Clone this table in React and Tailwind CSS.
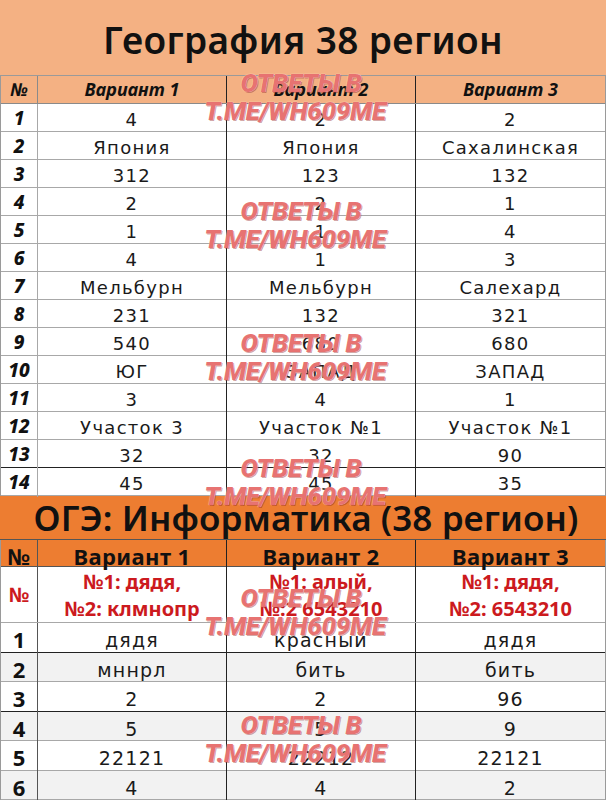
import React from "react";

const T1 = [
  ["1", "4", "2", "2"],
  ["2", "Япония", "Япония", "Сахалинская"],
  ["3", "312", "123", "132"],
  ["4", "2", "2", "1"],
  ["5", "1", "1", "4"],
  ["6", "4", "1", "3"],
  ["7", "Мельбурн", "Мельбурн", "Салехард"],
  ["8", "231", "132", "321"],
  ["9", "540", "680", "680"],
  ["10", "ЮГ", "ЗАПАД", "ЗАПАД"],
  ["11", "3", "4", "1"],
  ["12", "Участок 3", "Участок №1", "Участок №1"],
  ["13", "32", "32", "90"],
  ["14", "45", "45", "35"],
];

const T2 = [
  ["1", "дядя", "красный", "дядя"],
  ["2", "мннрл", "бить", "бить"],
  ["3", "2", "2", "96"],
  ["4", "5", "5", "9"],
  ["5", "22121", "22212", "22121"],
  ["6", "4", "4", "2"],
];

const data = "font-['DejaVu_Sans',sans-serif] text-[18px] tracking-[1.3px] text-[#1a1a1a] pt-[2px]";
const data2 = "font-['DejaVu_Sans',sans-serif] text-[19px] tracking-[1.2px] text-[#1a1a1a] pt-[2px]";

function Watermark({ top }) {
  return (
    <div
      className="absolute left-[185px] w-[220px] flex flex-col items-center pointer-events-none font-['Roboto',sans-serif] font-black italic text-[26px] leading-[28px] tracking-[-0.3px] text-[#e35a58]/85 [text-shadow:0_0_1px_#fff,1px_1px_0_rgba(130,0,0,0.4)]"
      style={{ top }}
    >
      <span className="translate-x-[6px]">ОТВЕТЫ В</span>
      <span>T.ME/WH609ME</span>
    </div>
  );
}

export default function App() {
  return (
    <div className="relative w-[606px] h-[800px] overflow-hidden bg-white">
      {/* Title 1 */}
      <div className="h-[76px] bg-[#f4b183] border-b border-[#9a9a9a] flex items-center justify-center pt-[4px]">
        <span className="font-['Noto_Sans',sans-serif] font-semibold text-[37px] text-[#111] tracking-[0.4px]">
          География 38 регион
        </span>
      </div>

      {/* Table 1 */}
      <div className="border-l border-r border-[#9a9a9a]">
        <div className="grid grid-cols-[37px_189px_189px_189px] h-[28px] bg-[#f4b183] border-b border-[#8a8a8a] font-['Noto_Sans',sans-serif] font-bold italic text-[18px] text-[#111]">
          <div className="flex items-center justify-center border-r border-[#8a8a8a]">№</div>
          <div className="flex items-center justify-center border-r border-[#222]">Вариант 1</div>
          <div className="flex items-center justify-center border-r border-[#222]">Вариант 2</div>
          <div className="flex items-center justify-center">Вариант 3</div>
        </div>
        {T1.map((r, i) => (
          <div
            key={i}
            className={
              "grid grid-cols-[37px_189px_189px_189px] h-[28px] border-b " +
              (i === 12 ? "border-[#222]" : "border-[#a8a8a8]")
            }
          >
            <div className="flex items-center justify-center border-r border-[#a8a8a8] font-['Noto_Sans',sans-serif] font-extrabold italic text-[19px] text-[#111]">
              {r[0]}
            </div>
            <div className={"flex items-center justify-center border-r border-[#222] " + data}>{r[1]}</div>
            <div className={"flex items-center justify-center border-r border-[#222] " + data}>{r[2]}</div>
            <div className={"flex items-center justify-center " + data}>{r[3]}</div>
          </div>
        ))}
      </div>

      {/* Title 2 */}
      <div className="h-[44px] bg-[#ed7d31] border-b border-[#555] flex items-center justify-center">
        <span className="font-['Noto_Sans',sans-serif] font-semibold text-[35px] text-[#111] leading-none tracking-[0.1px] translate-x-[3px]">
          ОГЭ: Информатика (38 регион)
        </span>
      </div>

      {/* Table 2 */}
      <div className="border-l border-r border-[#9a9a9a]">
        <div className="grid grid-cols-[37px_189px_189px_189px] h-[27px] bg-[#ed7d31] border-b border-[#555] font-['Noto_Sans',sans-serif] font-bold text-[22px] tracking-[0.4px] text-[#111]">
          <div className="flex items-center justify-center border-r border-[#555]">№</div>
          <div className="flex items-center justify-center border-r border-[#222]">Вариант 1</div>
          <div className="flex items-center justify-center border-r border-[#222]">Вариант 2</div>
          <div className="flex items-center justify-center">Вариант 3</div>
        </div>
        <div className="grid grid-cols-[37px_189px_189px_189px] h-[56px] border-b border-[#a8a8a8] font-['Noto_Sans',sans-serif] font-bold text-[20px] leading-[27px] text-[#cc1a1e]">
          <div className="flex items-center justify-center border-r border-[#555]">№</div>
          <div className="flex flex-col items-center justify-center border-r border-[#222]">
            <span>№1: дядя,</span>
            <span>№2: клмнопр</span>
          </div>
          <div className="flex flex-col items-center justify-center border-r border-[#222]">
            <span>№1: алый,</span>
            <span>№:2 6543210</span>
          </div>
          <div className="flex flex-col items-center justify-center">
            <span>№1: дядя,</span>
            <span>№2: 6543210</span>
          </div>
        </div>
        {T2.map((r, i) => (
          <div
            key={i}
            className={
              "grid grid-cols-[37px_189px_189px_189px] h-[29.5px] border-b " +
              (i === 0 || i === 2 ? "border-[#222] " : "border-[#a8a8a8] ") +
              (i % 2 === 1 ? "bg-[#f2f2f2]" : "bg-white")
            }
          >
            <div className="flex items-center justify-center border-r border-[#555] font-['Noto_Sans',sans-serif] font-bold text-[22px] text-[#111]">
              {r[0]}
            </div>
            <div className={"flex items-center justify-center border-r border-[#222] " + data2}>{r[1]}</div>
            <div className={"flex items-center justify-center border-r border-[#222] " + data2}>{r[2]}</div>
            <div className={"flex items-center justify-center " + data2}>{r[3]}</div>
          </div>
        ))}
      </div>

      {[69, 197, 329, 454, 584, 711].map((t) => (
        <Watermark key={t} top={t} />
      ))}
    </div>
  );
}
